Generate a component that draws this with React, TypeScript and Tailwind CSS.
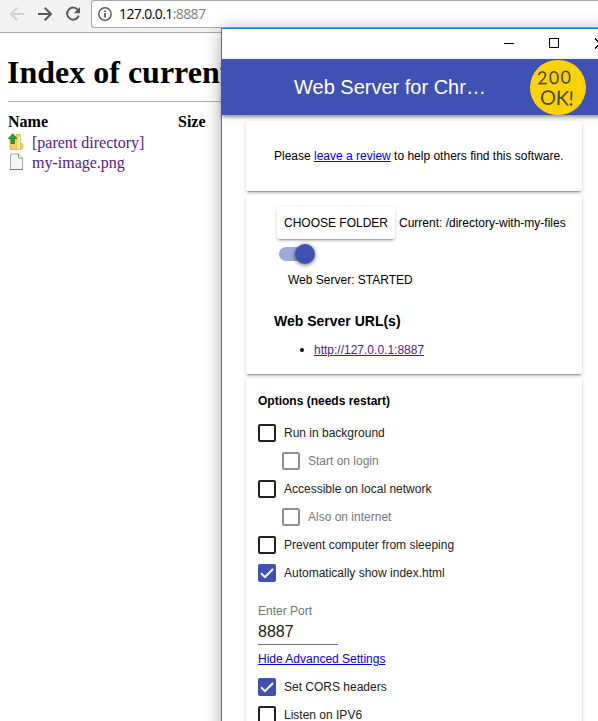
import type { ReactNode } from "react";

const SANS = "font-['Liberation_Sans',Arial,sans-serif]";

function Toolbar() {
  return (
    <div className="flex h-[33px] w-full items-start border-b border-[#a9a9a9] bg-[#f2f2f2]">
      <div className="flex h-7 w-[91px] shrink-0 items-center pl-2">
        <svg width="76" height="20" viewBox="0 0 76 20" fill="none" strokeWidth="2">
          <path d="M16 10H3M9.3 3.7L3 10L9.3 16.3" stroke="#d2d2d2" />
          <path d="M30 10H43M36.7 3.7L43 10L36.7 16.3" stroke="#5a5a5a" />
          <path d="M70 6.1A6 6 0 1 0 70.8 11.6" stroke="#5a5a5a" />
          <path d="M72 3V9.2H65.8Z" fill="#5a5a5a" />
        </svg>
      </div>
      <div className="flex h-7 flex-1 items-center rounded-l-[3px] border border-r-0 border-[#a9a9a9] bg-white pl-[6px]">
        <svg width="14" height="14" viewBox="0 0 14 14" fill="none">
          <circle cx="7" cy="7" r="6.2" stroke="#5a5a5a" strokeWidth="1.4" />
          <path d="M7 6V10.5M7 3.5V5" stroke="#5a5a5a" strokeWidth="1.8" />
        </svg>
        <span className="ml-[7px] font-['Open_Sans',sans-serif] text-[14px] leading-5 tracking-[-0.6px] text-black">
          127.0.0.1<span className="text-[#808080]">:8887</span>
        </span>
      </div>
    </div>
  );
}

function FolderIcon() {
  return (
    <svg width="16" height="18" viewBox="0 0 16 18" className="-mt-[2px]">
      <path d="M2 5H8V1.5H12V16.5H2Z" fill="#efd16c" stroke="#d9ae3e" strokeWidth="0.8" />
      <path d="M9 4L12.5 2V16.5H9Z" fill="#f8e69a" stroke="#dfb84d" strokeWidth="0.6" />
      <path d="M12.5 10L15 11V15.5L12.5 16.5Z" fill="#eed06d" stroke="#d9ae3e" strokeWidth="0.6" />
      <path d="M4.7 0.8L9 5.5H6.4V10.5H3V5.5H0.5Z" fill="#2e9e2c" stroke="#14780f" strokeWidth="0.8" />
    </svg>
  );
}

function FileIcon() {
  return (
    <svg width="16" height="18" viewBox="0 0 16 18" className="-mt-[2px]">
      <path d="M2.5 1H10.5L14.5 5V16.5H2.5Z" fill="#f6f6f6" stroke="#a6a6a6" />
      <path d="M10.5 1V5H14.5" fill="#fff" stroke="#8a8a8a" />
      <path d="M2 16.5H15" stroke="#777" />
    </svg>
  );
}

function Listing() {
  return (
    <main className="px-2 font-['Liberation_Serif','Times_New_Roman',serif] text-[16px] leading-5">
      <h1 className="-ml-px mt-[21px] whitespace-nowrap text-[32px] font-bold leading-[37px]">Index of current</h1>
      <div className="mt-[10px] h-px w-full bg-[#b0b0b0]" />
      <div className="mt-[10px] flex font-bold">
        <span className="w-[170px]">Name</span>
        <span>Size</span>
      </div>
      <div className="flex items-center pt-px text-[#551a8b]">
        <FolderIcon />
        <span className="ml-2">[parent directory]</span>
      </div>
      <div className="flex items-center text-[#551a8b]">
        <FileIcon />
        <span className="ml-2">my-image.png</span>
      </div>
    </main>
  );
}

function Badge() {
  return (
    <div className="relative h-[55px] w-14 overflow-hidden rounded-full bg-[#fbd304]">
      <svg width="56" height="55" viewBox="0 0 56 55" className="absolute inset-0" fill="none" stroke="#ffe03c" strokeWidth="0.6" opacity="0.6">
        <defs>
          <pattern id="hex" width="14" height="24" patternUnits="userSpaceOnUse">
            <path d="M7 0V4L0 8V16L7 20V24M7 4L14 8V16L7 20" />
          </pattern>
        </defs>
        <rect width="56" height="55" fill="url(#hex)" stroke="none" />
      </svg>
      <div className="relative flex flex-col items-start gap-[3px] pt-[9px] font-['Lato',sans-serif] text-[#4d4a35]">
        <span className="ml-[7px] -rotate-2 text-[18px] leading-4 tracking-[1.3px]">200</span>
        <span className="ml-[10px] rotate-2 text-[20px] leading-[18px] tracking-[-0.3px]">OK!</span>
      </div>
    </div>
  );
}

function Check({ children, on, sub }: { children: ReactNode; on?: boolean; sub?: boolean }) {
  return (
    <div className={`flex h-7 items-center ${sub ? "pl-6 text-[#777]" : "text-[#212121]"}`}>
      <span
        className={`flex h-[18px] w-[18px] items-center justify-center rounded-[2px] border-2 ${
          on ? "border-[#3f51b5] bg-[#3f51b5]" : sub ? "border-[#909090]" : "border-[#212121]"
        }`}
      >
        {on && (
          <svg width="14" height="14" viewBox="0 0 14 14" fill="none" className="shrink-0">
            <path d="M1 7.3L5 11.2L13 3" stroke="#fff" strokeWidth="2" />
          </svg>
        )}
      </span>
      <span className="ml-2">{children}</span>
    </div>
  );
}

const CARD = "mx-6 rounded-[2px] bg-white shadow-[0_2px_2px_0_rgba(0,0,0,0.14),0_1px_5px_0_rgba(0,0,0,0.12),0_3px_1px_-2px_rgba(0,0,0,0.2)]";

function AppWindow() {
  return (
    <div className={`absolute left-[221px] top-7 h-[760px] w-[386px] border border-[#1883d7] bg-white text-[12px] leading-4 text-black shadow-[0_2px_16px_rgba(0,0,0,0.35)] ${SANS}`}>
      <div className="flex h-[30px] items-center pl-[282px]">
        <svg width="100" height="12" viewBox="0 0 100 12" fill="none" stroke="#000" shapeRendering="crispEdges">
          <path d="M0 5.5H10M45.5 0.5H54.5V9.5H45.5Z" />
          <path d="M91 0.5L101 10.5M91 10.5L101 0.5" />
        </svg>
      </div>
      <header className="relative flex h-14 items-center bg-[#3f51b5] pl-[72px] shadow-[0_2px_4px_rgba(0,0,0,0.45)]">
        <span className="w-[236px] text-[20px] leading-6 text-white">Web Server for Chr…</span>
        <Badge />
      </header>
      <section className={`mt-[6px] flex h-[70px] items-center pl-7 ${CARD}`}>
        <p className="whitespace-nowrap">
          Please <span className="text-[#0000ee] underline">leave a review</span> to help others find this software.
        </p>
      </section>
      <section className={`mt-1 h-[179px] pt-3 ${CARD}`}>
        <div className="flex items-center whitespace-nowrap pl-[31px]">
          <span className="flex h-8 w-[118px] items-center justify-center rounded-[3px] shadow-[0_2px_2px_0_rgba(0,0,0,0.14),0_1px_5px_0_rgba(0,0,0,0.12),0_3px_1px_-2px_rgba(0,0,0,0.2)]">
            CHOOSE FOLDER
          </span>
          <span className="ml-1">Current: /directory-with-my-files</span>
        </div>
        <div className="ml-[33px] mt-[5px] flex h-5 w-9 items-center">
          <span className="h-[14px] w-7 rounded-full bg-[#9fa8da]" />
          <span className="-ml-3 h-5 w-5 shrink-0 rounded-full bg-[#3f51b5] shadow-[0_1px_4px_rgba(0,0,0,0.6)]" />
        </div>
        <p className="ml-[42px] mt-2">Web Server: STARTED</p>
        <h2 className="ml-7 mt-[25px] text-[14px] font-bold leading-4">Web Server URL(s)</h2>
        <div className="ml-[54px] mt-[13px] flex items-center">
          <span className="h-1 w-1 rounded-full bg-black" />
          <span className="ml-[10px] text-[#551a8b] underline">http://127.0.0.1:8887</span>
        </div>
      </section>
      <section className={`mt-1 h-[440px] px-3 pt-[15px] ${CARD}`}>
        <h2 className="mb-[10px] font-bold">Options (needs restart)</h2>
        <Check>Run in background</Check>
        <Check sub>Start on login</Check>
        <Check>Accessible on local network</Check>
        <Check sub>Also on internet</Check>
        <Check>Prevent computer from sleeping</Check>
        <Check on>Automatically show index.html</Check>
        <div className="mt-4 text-[#737373]">Enter Port</div>
        <div className="h-[26px] w-20 border-b border-[#737373] text-[16px] leading-[25px] text-[#212121]">8887</div>
        <div className="mb-[6px] mt-[6px] text-[#0000ee] underline">Hide Advanced Settings</div>
        <Check on>Set CORS headers</Check>
        <Check>Listen on IPV6</Check>
      </section>
    </div>
  );
}

export default function App() {
  return (
    <div className="relative h-[721px] w-[598px] overflow-hidden bg-white">
      <Toolbar />
      <Listing />
      <AppWindow />
    </div>
  );
}
